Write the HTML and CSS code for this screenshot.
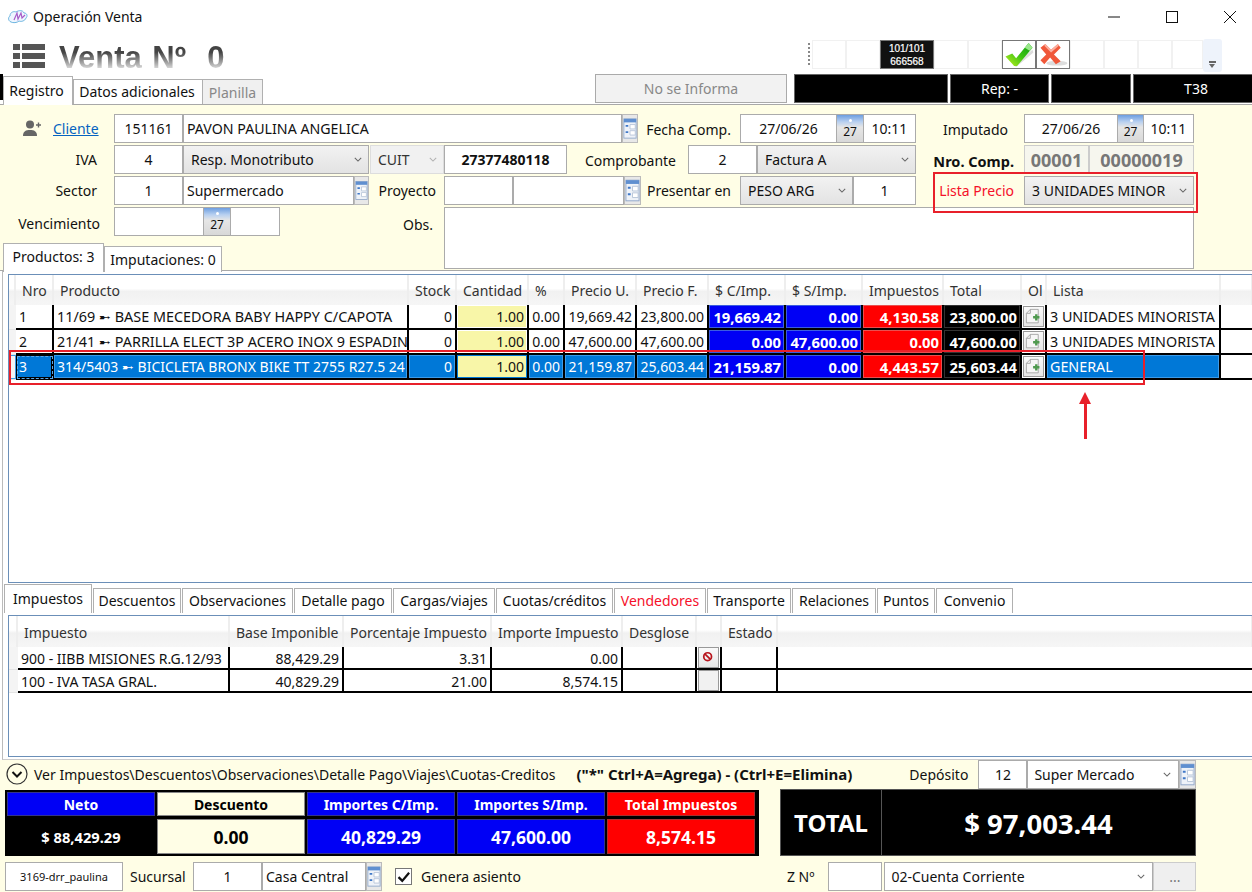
FILE: index.html
```html
<!DOCTYPE html>
<html lang="es">
<head>
  <meta charset="UTF-8">
  <title>Operación Venta</title>
  <link rel="stylesheet" href="styles.css">
</head>
<body>
  <svg class="sprite" aria-hidden="true">
    <symbol id="chev" viewBox="0 0 10 6"><path d="M1 1l4 4 4-4" fill="none" stroke="#666" stroke-width="1.3"/></symbol>
    <symbol id="lookup" viewBox="0 0 16 26">
      <rect x="1" y="2" width="14" height="22" fill="#eef2f8" stroke="#8fa6c8"/>
      <rect x="1" y="2" width="14" height="4" fill="#5f8fd0"/>
      <path d="M3 10h3M3 17h3" stroke="#3f78c8" stroke-width="2"/>
      <path d="M8 8.500h6v5h-6zM8 15.500h6v5h-6z" fill="#fff" stroke="#b6c4d8"/>
    </symbol>
    <symbol id="docadd" viewBox="0 0 24 24">
      <path d="M8 3h10v17H3V8z" fill="#f6f6f6" stroke="#999"/>
      <path d="M8 3v5H3" fill="none" stroke="#999"/>
      <path d="M15.500 9v8M11.500 13h8" stroke="#4f9a4f" stroke-width="3"/>
    </symbol>
  </svg>

  <div class="titlebar">
    <svg class="app-icon" viewBox="0 0 20 14">
      <path d="M3 12C0 11 0 7 2 6 2 2 6 1 8 2c3-2 7-2 8 1 3 0 4 3 2 5-1 3-5 4-7 3-2 2-6 2-8 1z" fill="#eef6ff" stroke="#6fb6e0"/>
      <path d="M6 10l3-7 1 6 3-6 1 5 3-3" fill="none" stroke="#a85cc8" stroke-width="1.200"/>
    </svg>
    <span class="title-text">Operación Venta</span>
    <div class="win-controls">
      <svg class="win-btn" viewBox="0 0 12 12"><path d="M0 6h12" stroke="#111"/></svg>
      <svg class="win-btn" viewBox="0 0 12 12"><rect x=".5" y=".5" width="11" height="11" fill="none" stroke="#111"/></svg>
      <svg class="win-btn" viewBox="0 0 12 12"><path d="M0 0l12 12M12 0L0 12" stroke="#111"/></svg>
    </div>
  </div>

  <div class="header">
    <svg class="menu-icon" viewBox="0 0 32 24">
      <path d="M0 0h7v6H0zM9 0h23v6H9zM0 9h7v6H0zM9 9h23v6H9zM0 18h7v6H0zM9 18h23v6H9z" fill="#555"/>
    </svg>
    <div class="doc-title">Venta Nº&nbsp; 0</div>
    <div class="toolbar">
      <div class="grip"></div>
      <div class="tb-cell"></div>
      <div class="tb-cell"></div>
      <div class="tb-counter">101/101<br>666568</div>
      <div class="tb-cell"></div>
      <div class="tb-cell"></div>
      <div class="tb-btn">
        <svg viewBox="0 0 32 28" width="32" height="27">
          <defs>
            <linearGradient id="okfill" x1="0" y1="1" x2="1" y2="0">
              <stop offset="0" stop-color="#c4f020"/>
              <stop offset="0.5" stop-color="#3cc412"/>
              <stop offset="1" stop-color="#0a9a14"/>
            </linearGradient>
          </defs>
          <path d="M10 25l20-16 1 3-18 15z" fill="#ddd"/>
          <path d="M2 16l7-3 4 5L26 2l4 5-16 19h-3z" fill="url(#okfill)"/>
          <path d="M22 7l4-5 4 5-3 3z" fill="#9be88c"/>
        </svg>
      </div>
      <div class="tb-btn">
        <svg viewBox="0 0 32 28" width="32" height="27">
          <ellipse cx="20" cy="23" rx="11" ry="2.500" fill="#ddd"/>
          <path d="M3 7l5-4 6 6 7-6 3 4-7 7 7 7-5 3-6-7-6 7-4-4 6-6z" fill="#f0583a"/>
          <path d="M8 3l6 6 7-6 1 2-8 7-7-7z" fill="#fbb0a0"/>
        </svg>
      </div>
      <div class="tb-cell"></div>
      <div class="tb-cell"></div>
      <div class="tb-cell"></div>
      <div class="tb-cell tb-last"></div>
      <div class="tb-more"><span class="tb-more-bar"></span><span class="tb-more-arrow"></span></div>
    </div>
  </div>

  <div class="tabrow">
    <div class="edge-mark"></div>
    <div class="tab tab-active tab-registro">Registro</div>
    <div class="tab tab-datos">Datos adicionales</div>
    <div class="tab tab-off">Planilla</div>
    <div class="informa">No se Informa</div>
    <div class="status w154"></div>
    <div class="status w99">Rep: -</div>
    <div class="status w80"></div>
    <div class="status w126">T38</div>
  </div>

  <div class="form">
    <div class="row">
      <div class="client-label">
        <svg class="person-icon" viewBox="0 0 18 17">
          <circle cx="7" cy="4.500" r="4" fill="#666"/>
          <path d="M0 16c0-5 3-6 7-6s7 1 7 6z" fill="#666"/>
          <path d="M13 5h5M15.500 2.500v5" stroke="#666" stroke-width="1.400"/>
        </svg>
        <a class="client-link">Cliente</a>
      </div>
      <div class="fld center w69">151161</div>
      <div class="fld fld-name w439">PAVON PAULINA ANGELICA</div>
      <svg class="lookup w16"><use href="#lookup"/></svg>
      <div class="lbl lbl-low w102 pr9">Fecha Comp.</div>
      <div class="fld center w97">27/06/26</div>
      <div class="cal w26"><span class="cal-dot"></span>27</div>
      <div class="fld center w53">10:11</div>
      <div class="lbl lbl-low w108 pr16">Imputado</div>
      <div class="fld center w94">27/06/26</div>
      <div class="cal w25"><span class="cal-dot"></span>27</div>
      <div class="fld center w51">10:11</div>
    </div>

    <div class="row">
      <div class="lbl w114 pr17">IVA</div>
      <div class="fld center w69">4</div>
      <div class="fld sel w186">Resp. Monotributo<svg class="chev"><use href="#chev"/></svg></div>
      <div class="fld sel sel-off w74">CUIT<svg class="chev chev-off"><use href="#chev"/></svg></div>
      <div class="fld center w123 strong">27377480118</div>
      <div class="lbl lbl-low w121 pr12">Comprobante</div>
      <div class="fld center w69">2</div>
      <div class="fld sel w159">Factura A<svg class="chev"><use href="#chev"/></svg></div>
      <div class="lbl lbl-low lbl-nro w108 pr10">Nro. Comp.</div>
      <div class="fld fld-off center w65">00001</div>
      <div class="fld fld-off center w105">00000019</div>
    </div>

    <div class="row">
      <div class="lbl w114 pr17">Sector</div>
      <div class="fld center w69">1</div>
      <div class="fld w171">Supermercado</div>
      <svg class="lookup w15"><use href="#lookup"/></svg>
      <div class="lbl w75 pr8">Proyecto</div>
      <div class="fld w69"></div>
      <div class="fld w111"></div>
      <svg class="lookup w17"><use href="#lookup"/></svg>
      <div class="lbl w99 pr9">Presentar en</div>
      <div class="fld sel w113">PESO ARG<svg class="chev"><use href="#chev"/></svg></div>
      <div class="fld center w63">1</div>
      <div class="lbl w108 pr10 red">Lista Precio</div>
      <div class="fld sel w170">3 UNIDADES MINOR<svg class="chev"><use href="#chev"/></svg></div>
    </div>

    <div class="row-last">
      <div class="form-left">
        <div class="row row-venc">
          <div class="lbl lbl-venc w114 pr14">Vencimiento</div>
          <div class="fld w90"></div>
          <div class="cal w26"><span class="cal-dot"></span>27</div>
          <div class="fld w50"></div>
          <div class="obs-label">Obs.</div>
        </div>
        <div class="subtabs">
          <div class="tab tab-active tab-prod">Productos: 3</div>
          <div class="tab tab-imput">Imputaciones: 0</div>
        </div>
      </div>
      <div class="fld obs"></div>
    </div>
  </div>

  <div class="grid-wrap">
    <div class="grid-box prod-box">
      <table class="grid prod-grid">
        <colgroup>
          <col class="c7"><col class="c38"><col class="c355"><col class="c48"><col class="c72"><col class="c36"><col class="c72"><col class="c72">
          <col class="c77"><col class="c77"><col class="c81"><col class="c78"><col class="c25"><col class="c174"><col>
        </colgroup>
        <thead>
          <tr>
            <th></th><th>Nro</th><th>Producto</th><th>Stock</th><th>Cantidad</th><th>%</th><th>Precio U.</th><th>Precio F.</th>
            <th>$ C/Imp.</th><th>$ S/Imp.</th><th>Impuestos</th><th>Total</th><th>Ol</th><th>Lista</th><th></th>
          </tr>
        </thead>
        <tbody>
          <tr>
            <td class="rowhead"></td><td>1</td><td class="prod-name">11/69 ➸ BASE MECEDORA BABY HAPPY C/CAPOTA</td>
            <td class="num">0</td><td class="num qty">1.00</td><td class="num">0.00</td><td class="num">19,669.42</td><td class="num">23,800.00</td>
            <td class="num blue">19,669.42</td><td class="num blue">0.00</td><td class="num redc">4,130.58</td><td class="num blackc">23,800.00</td>
            <td class="doc"><span class="doc-btn"><svg><use href="#docadd"/></svg></span></td><td class="lista">3 UNIDADES MINORISTA</td><td class="end"></td>
          </tr>
          <tr>
            <td class="rowhead"></td><td>2</td><td class="prod-name">21/41 ➸ PARRILLA ELECT 3P ACERO INOX 9 ESPADIN</td>
            <td class="num">0</td><td class="num qty">1.00</td><td class="num">0.00</td><td class="num">47,600.00</td><td class="num">47,600.00</td>
            <td class="num blue">0.00</td><td class="num blue">47,600.00</td><td class="num redc">0.00</td><td class="num blackc">47,600.00</td>
            <td class="doc"><span class="doc-btn"><svg><use href="#docadd"/></svg></span></td><td class="lista">3 UNIDADES MINORISTA</td><td class="end"></td>
          </tr>
          <tr class="selected">
            <td class="rowhead"></td><td class="focus">3</td><td class="prod-name">314/5403 ➸ BICICLETA BRONX BIKE TT 2755 R27.5 24</td>
            <td class="num">0</td><td class="num qty">1.00</td><td class="num">0.00</td><td class="num">21,159.87</td><td class="num">25,603.44</td>
            <td class="num blue">21,159.87</td><td class="num blue">0.00</td><td class="num redc">4,443.57</td><td class="num blackc">25,603.44</td>
            <td class="doc"><span class="doc-btn"><svg><use href="#docadd"/></svg></span></td><td class="lista">GENERAL</td><td class="end"></td>
          </tr>
        </tbody>
      </table>
    </div>

    <div class="lower-tabs">
      <div class="tab tab-active lt-imp">Impuestos</div>
      <div class="tab lt-desc">Descuentos</div>
      <div class="tab lt-obs">Observaciones</div>
      <div class="tab lt-det">Detalle pago</div>
      <div class="tab lt-car">Cargas/viajes</div>
      <div class="tab lt-cuo">Cuotas/créditos</div>
      <div class="tab lt-ven red">Vendedores</div>
      <div class="tab lt-tra">Transporte</div>
      <div class="tab lt-rel">Relaciones</div>
      <div class="tab lt-pun">Puntos</div>
      <div class="tab lt-con">Convenio</div>
    </div>

    <div class="grid-box tax-box">
      <table class="grid tax-grid">
        <colgroup>
          <col class="c9"><col class="c212"><col class="c114"><col class="c148"><col class="c131"><col class="c74"><col class="c25"><col class="c56"><col>
        </colgroup>
        <thead>
          <tr>
            <th></th><th>Impuesto</th><th>Base Imponible</th><th>Porcentaje Impuesto</th><th>Importe Impuesto</th><th>Desglose</th><th></th><th>Estado</th><th></th>
          </tr>
        </thead>
        <tbody>
          <tr>
            <td class="rowhead"></td><td>900 - IIBB MISIONES R.G.12/93</td><td class="num">88,429.29</td><td class="num">3.31</td><td class="num">0.00</td><td></td>
            <td class="doc"><span class="doc-btn">
              <svg viewBox="0 0 22 22"><circle cx="10" cy="10" r="4.500" fill="none" stroke="#b8141c" stroke-width="2"/><path d="M7 7l6 6" stroke="#b8141c" stroke-width="2"/></svg>
            </span></td><td></td><td class="end"></td>
          </tr>
          <tr>
            <td class="rowhead"></td><td>100 - IVA TASA GRAL.</td><td class="num">40,829.29</td><td class="num">21.00</td><td class="num">8,574.15</td><td></td>
            <td class="doc"><span class="doc-btn doc-empty"></span></td><td></td><td class="end"></td>
          </tr>
        </tbody>
      </table>
    </div>
  </div>

  <div class="bottom">
    <div class="info-row">
      <svg class="expand" viewBox="0 0 22 22">
        <circle cx="11" cy="11" r="10" fill="none" stroke="#333" stroke-width="1.200"/>
        <path d="M6.500 9l4.500 4.500L15.500 9" fill="none" stroke="#111" stroke-width="2"/>
      </svg>
      <span class="info-text">Ver Impuestos\Descuentos\Observaciones\Detalle Pago\Viajes\Cuotas-Creditos</span>
      <span class="info-keys">("*" Ctrl+A=Agrega) - (Ctrl+E=Elimina)</span>
      <span class="deposit-label">Depósito</span>
      <div class="fld center w49">12</div>
      <div class="fld sel-plain w152">Super Mercado<svg class="chev"><use href="#chev"/></svg></div>
      <svg class="lookup w17"><use href="#lookup"/></svg>
    </div>

    <div class="totals-row">
      <div class="totals">
        <div class="t-head t-blue">Neto</div>
        <div class="t-head t-cream">Descuento</div>
        <div class="t-head t-blue">Importes C/Imp.</div>
        <div class="t-head t-blue">Importes S/Imp.</div>
        <div class="t-head t-red">Total Impuestos</div>
        <div class="t-val t-black">$ 88,429.29</div>
        <div class="t-val t-cream t-big">0.00</div>
        <div class="t-val t-blue t-big">40,829.29</div>
        <div class="t-val t-blue t-big">47,600.00</div>
        <div class="t-val t-red t-big">8,574.15</div>
      </div>
      <div class="grand">
        <div class="grand-label">TOTAL</div>
        <div class="grand-value">$ 97,003.44</div>
      </div>
    </div>

    <div class="footer-row">
      <div class="fld center user-box">3169-drr_paulina</div>
      <span class="foot-label">Sucursal</span>
      <div class="fld center w69">1</div>
      <div class="fld w104">Casa Central</div>
      <svg class="lookup w16"><use href="#lookup"/></svg>
      <span class="check">
        <svg viewBox="0 0 12 12"><path d="M2 6.500l3 3L10.500 3" fill="none" stroke="#111" stroke-width="1.800"/></svg>
      </span>
      <span class="check-label">Genera asiento</span>
      <span class="zn-label">Z Nº</span>
      <div class="fld w54"></div>
      <div class="fld sel-plain cuenta">02-Cuenta Corriente<svg class="chev"><use href="#chev"/></svg></div>
      <div class="dots">...</div>
    </div>
  </div>

  <!-- annotations drawn on top of the screenshot -->
  <div class="mark mark-lista"></div>
  <div class="mark mark-row"></div>
  <div class="arrow-shaft"></div>
  <div class="arrow-head"></div>
</body>
</html>
```

FILE: styles.css
```css
* {
  margin: 0;
  padding: 0;
  box-sizing: border-box;
}

html, body {
  width: 1252px;
  height: 892px;
  overflow: hidden;
}

body {
  position: relative;
  background: #fff;
  color: #111;
  font-family: "Noto Sans", "Open Sans", sans-serif;
  font-size: 14px;
}

.sprite {
  display: block;
  width: 0;
  height: 0;
}

/* title bar */
.titlebar {
  display: flex;
  align-items: center;
  height: 33px;
  padding-left: 8px;
}

.app-icon {
  width: 20px;
  height: 14px;
}

.title-text {
  margin-left: 5px;
}

.win-controls {
  display: flex;
  gap: 46px;
  margin-left: auto;
  margin-right: 16px;
}

.win-btn {
  width: 12px;
  height: 12px;
}

/* header */
.header {
  display: flex;
  height: 41px;
  padding-left: 13px;
}

.menu-icon {
  width: 32px;
  height: 24px;
  margin-top: 11px;
}

.doc-title {
  margin-left: 14px;
  margin-top: 7px;
  height: 35px;
  font-family: "Liberation Sans", sans-serif;
  font-size: 31px;
  line-height: 35px;
  word-spacing: 2px;
  font-weight: bold;
  background: linear-gradient(#444 35%, #f4f4f4 90%);
  -webkit-background-clip: text;
  background-clip: text;
  -webkit-text-fill-color: transparent;
  white-space: nowrap;
}

.toolbar {
  position: absolute;
  left: 808px;
  top: 39px;
  display: flex;
}

.grip {
  width: 4px;
  height: 23px;
  margin-top: 4px;
  background: repeating-linear-gradient(#888 0 2px, transparent 2px 4px);
  background-size: 2px 100%;
  background-repeat: no-repeat;
}

.tb-cell {
  width: 34px;
  height: 29px;
  margin-top: 1px;
  border: 1px solid #f1f1f1;
}

.tb-last {
  width: 31px;
}

.tb-counter {
  width: 54px;
  height: 29px;
  margin-top: 1px;
  background: #111;
  border: 1px solid #777;
  color: #fff;
  font-family: "Liberation Sans", sans-serif;
  font-size: 10px;
  -webkit-text-stroke: 0.2px #fff;
  line-height: 13px;
  padding-top: 1px;
  text-align: center;
}

.tb-btn {
  width: 34px;
  height: 29px;
  margin-top: 1px;
  border: 1px solid #777;
  background: #fff;
  overflow: hidden;
}

.tb-more {
  position: relative;
  width: 19px;
  height: 33px;
  background: #eef3fb;
  border-radius: 3px;
}

.tb-more-bar {
  position: absolute;
  left: 6px;
  top: 22px;
  width: 7px;
  height: 2px;
  background: #666;
}

.tb-more-arrow {
  position: absolute;
  left: 6px;
  top: 25px;
  border-left: 3.500px solid transparent;
  border-right: 3.500px solid transparent;
  border-top: 4px solid #666;
}

/* top tabs */
.tabrow {
  display: flex;
  height: 31px;
  border-bottom: 1px solid #a8a8a8;
}

.edge-mark {
  flex: none;
  width: 3px;
  height: 26px;
  background: #000;
}

.tab {
  display: flex;
  flex: none;
  align-items: center;
  justify-content: center;
  background: #fff;
  border: 1px solid #b0b0b0;
  border-bottom: none;
  white-space: nowrap;
}

.tab-active {
  margin-bottom: -1px;
  padding-bottom: 4px;
}

.tab-registro {
  width: 70px;
  margin-top: 2px;
  padding-right: 3px;
  padding-bottom: 2px;
}

.tab-datos {
  width: 130px;
  margin-top: 5px;
  padding-right: 2px;
  padding-bottom: 1px;
}

.tab-off {
  width: 60px;
  margin-top: 5px;
  background: #f0f0f0;
  color: #888;
  border-left: none;
}

.informa {
  display: flex;
  flex: none;
  align-items: center;
  justify-content: center;
  width: 192px;
  height: 29px;
  margin-left: 332px;
  margin-right: 7px;
  background: #f2f2f2;
  border: 1px solid #aaa;
  color: #888;
}

.status {
  display: flex;
  flex: none;
  align-items: center;
  justify-content: center;
  height: 29px;
  margin-right: 2px;
  background: #000;
  border: 1px solid #666;
  color: #fff;
}

/* form */
.form {
  height: 166px;
  padding-top: 9px;
  background: #fffee6;
  border-bottom: 1px solid #a8a8a8;
}

.row {
  display: flex;
  height: 29px;
  margin-bottom: 2px;
}

.row-last {
  display: flex;
  height: 63px;
}

.form-left {
  width: 444px;
}

.row-venc {
  margin-bottom: 6px;
}

.lbl {
  display: flex;
  flex: none;
  align-items: center;
  justify-content: flex-end;
  white-space: nowrap;
}

.lbl-low {
  padding-top: 2px;
}

.lbl-venc {
  padding-top: 4px;
}

.lbl-nro {
  font-size: 14.500px;
  font-weight: bold;
}

.client-label {
  display: flex;
  flex: none;
  align-items: center;
  width: 114px;
  padding-left: 23px;
}

.person-icon {
  width: 18px;
  height: 17px;
}

.client-link {
  margin-left: 12px;
  color: #0563c1;
  text-decoration: underline;
}

.obs-label {
  margin-left: auto;
  margin-right: 11px;
  padding-top: 8px;
}

.fld {
  display: flex;
  flex: none;
  align-items: center;
  height: 29px;
  padding: 0 3px;
  background: #fff;
  border: 1px solid #ababab;
  white-space: nowrap;
  overflow: hidden;
}

.fld-name {
  font-size: 14.200px;
}

.center {
  justify-content: center;
}

.strong {
  font-weight: bold;
}

.red {
  color: #f5102a;
}

.sel {
  justify-content: space-between;
  padding: 0 6px 0 7px;
  background: linear-gradient(#f2f2f2, #e3e3e3);
}

.sel-plain {
  justify-content: space-between;
  padding: 0 7px 0 6px;
}

.sel-off {
  margin-left: 1px;
  background: #f1f1f1;
  border-color: #ddd;
  color: #333;
}

.fld-off {
  background: #f6f6ee;
  border-color: #ccc;
  color: #777;
  font-weight: bold;
  font-size: 18px;
}

.chev {
  flex: none;
  width: 8px;
  height: 5px;
}

.chev-off {
  opacity: 0.45;
}

.lookup {
  flex: none;
  height: 29px;
  background: #e8e8e8;
  border: 1px solid #bbb;
}

.cal {
  position: relative;
  display: flex;
  flex: none;
  align-items: flex-end;
  justify-content: center;
  height: 29px;
  padding-bottom: 2px;
  background: linear-gradient(#6d9ee0 0, #b8d0f0 25%, #e6e6e6 45%, #d8d8d8 100%);
  border-top: 1px solid #ababab;
  border-bottom: 1px solid #ababab;
  font-size: 12px;
}

.cal-dot {
  position: absolute;
  left: 50%;
  top: 4px;
  width: 3px;
  height: 3px;
  margin-left: -1px;
  background: #fff;
  border-radius: 50%;
}

.obs {
  width: 750px;
  height: 62px;
}

.subtabs {
  display: flex;
  align-items: flex-end;
  height: 29px;
  padding-left: 3px;
}

.tab-prod {
  width: 101px;
  height: 29px;
}

.tab-imput {
  width: 118px;
  height: 26px;
  margin-bottom: -1px;
}

.pr8 { padding-right: 8px; }
.pr9 { padding-right: 9px; }
.pr10 { padding-right: 10px; }
.pr12 { padding-right: 12px; }
.pr14 { padding-right: 14px; }
.pr16 { padding-right: 16px; }
.pr17 { padding-right: 17px; }

.w15 { width: 15px; }
.w16 { width: 16px; }
.w17 { width: 17px; }
.w25 { width: 25px; }
.w26 { width: 26px; }
.w49 { width: 49px; }
.w50 { width: 50px; }
.w51 { width: 51px; }
.w53 { width: 53px; }
.w54 { width: 54px; }
.w63 { width: 63px; }
.w65 { width: 65px; }
.w69 { width: 69px; }
.w74 { width: 74px; }
.w75 { width: 75px; }
.w80 { width: 80px; }
.w90 { width: 90px; }
.w94 { width: 94px; }
.w97 { width: 97px; }
.w99 { width: 99px; }
.w102 { width: 102px; }
.w104 { width: 104px; }
.w105 { width: 105px; }
.w108 { width: 108px; }
.w111 { width: 111px; }
.w113 { width: 113px; }
.w114 { width: 114px; }
.w121 { width: 121px; }
.w123 { width: 123px; }
.w126 { width: 126px; }
.w152 { width: 152px; }
.w154 { width: 154px; }
.w159 { width: 159px; }
.w170 { width: 170px; }
.w171 { width: 171px; }
.w186 { width: 186px; }
.w439 { width: 439px; }

/* grids */
.grid-wrap {
  height: 489px;
  margin-left: 2px;
  padding-top: 3px;
  padding-left: 5px;
  border-left: 1px solid #bbb;
  border-bottom: 1px solid #ccc;
}

.grid-box {
  border: 1px solid #6b8fb8;
  border-right: none;
  background: #fff;
}

.prod-box {
  height: 309px;
}

.tax-box {
  height: 142px;
}

.grid {
  width: 1244px;
  table-layout: fixed;
  border-collapse: separate;
  border-spacing: 0;
}

.grid th {
  height: 30px;
  padding-left: 6px;
  background: linear-gradient(#fff 45%, #f1f1f1 55%, #f6f6f6);
  border-right: 2px solid #eee;
  color: #333;
  font-weight: normal;
  text-align: left;
  white-space: nowrap;
  overflow: hidden;
}

.tax-grid th {
  height: 31px;
  padding-top: 2px;
}

.grid td {
  height: 25px;
  padding: 0 3px;
  background: #fff;
  border-right: 2px solid #000;
  border-bottom: 2px solid #000;
  white-space: nowrap;
  overflow: hidden;
}

.tax-grid td {
  height: 23px;
  padding-top: 2px;
}

.grid .prod-name {
  font-size: 14.400px;
}

.grid .selected .prod-name {
  font-size: 14px;
}

.grid .lista {
  font-size: 14.300px;
}

.grid .rowhead {
  background: #f4f4f4;
  border-right: none;
  border-bottom: 1px solid #e4e4e4;
}

.grid .end {
  border-right: none;
}

.num {
  text-align: right;
}

.grid .qty {
  background: #f8f6a8;
  box-shadow: inset 0 0 0 1px #fff;
}

.grid .blue, .grid .redc, .grid .blackc {
  color: #fff;
  font-size: 14.800px;
  font-weight: bold;
}

.grid .blue {
  background: #0000f5;
  box-shadow: inset 0 0 0 1px #3a5ce0;
}

.grid .redc {
  background: #ff0000;
  box-shadow: inset 0 0 0 1px #e85050;
}

.grid .blackc {
  background: #000;
  box-shadow: inset 0 0 0 1px #333;
}

.grid .doc {
  padding: 0 1px;
}

.doc-btn {
  display: block;
  width: 21px;
  height: 21px;
  background: linear-gradient(#fafafa, #e6e6e6);
  border: 1px solid #999;
}

.doc-btn svg {
  display: block;
  width: 19px;
  height: 19px;
}

.doc-empty {
  background: #f1f1f1;
}

.selected td {
  background: #0078d7;
  box-shadow: inset 0 0 0 1px #3d9be8;
  color: #fff;
}

.selected .end {
  background: #fff;
  box-shadow: none;
}

.selected .qty {
  box-shadow: inset 0 0 0 1px #0078d7;
  color: #111;
}

.grid .focus {
  outline: 1px dashed #5aa8e8;
  outline-offset: -2px;
  box-shadow: inset 0 0 0 1px #000;
}

.selected .doc {
  background: #fff;
  box-shadow: none;
}

.lower-tabs {
  display: flex;
  align-items: flex-end;
  height: 32px;
  padding-bottom: 2px;
  margin-left: -4px;
}

.lower-tabs .tab {
  height: 25px;
  margin-right: 1px;
  padding-bottom: 2px;
}

.lower-tabs .tab-active {
  height: 29px;
  margin-bottom: 0;
  padding-bottom: 1px;
}

.lt-imp { width: 88px; }
.lt-desc { width: 88px; }
.lt-obs { width: 111px; }
.lt-det { width: 98px; }
.lt-car { width: 102px; }
.lt-cuo { width: 117px; }
.lt-ven { width: 92px; }
.lt-tra { width: 84px; }
.lt-rel { width: 84px; }
.lt-pun { width: 58px; }
.lt-con { width: 77px; }

.c7 { width: 7px; }
.c9 { width: 9px; }
.c25 { width: 25px; }
.c36 { width: 36px; }
.c38 { width: 38px; }
.c48 { width: 48px; }
.c56 { width: 56px; }
.c72 { width: 72px; }
.c74 { width: 74px; }
.c77 { width: 77px; }
.c78 { width: 78px; }
.c81 { width: 81px; }
.c114 { width: 114px; }
.c131 { width: 131px; }
.c148 { width: 148px; }
.c174 { width: 174px; }
.c212 { width: 212px; }
.c355 { width: 355px; }

/* bottom area */
.bottom {
  height: 132px;
  background: #fffee6;
}

.info-row {
  display: flex;
  align-items: center;
  height: 28px;
  padding-left: 6px;
}

.expand {
  flex: none;
  width: 22px;
  height: 22px;
}

.info-text {
  margin-left: 6px;
  white-space: nowrap;
}

.info-keys {
  margin-left: 21px;
  font-size: 15px;
  font-weight: bold;
  white-space: nowrap;
}

.deposit-label {
  margin-left: 57px;
  margin-right: 10px;
}

.totals-row {
  display: flex;
  margin-top: 2px;
  padding-left: 5px;
}

.totals {
  display: grid;
  grid-template-columns: repeat(5, 148px);
  grid-template-rows: 24px 35px;
  gap: 3px 2px;
  width: 754px;
  height: 66px;
  padding: 2px;
  background: #000;
}

.t-head, .t-val {
  display: flex;
  align-items: center;
  justify-content: center;
  font-weight: bold;
}

.t-val {
  padding-top: 1px;
  font-size: 14.700px;
}

.t-blue {
  background: #0000f5;
  border: 1px solid #33338c;
  color: #fff;
}

.t-red {
  background: #ff0000;
  border: 1px solid #a83030;
  color: #fff;
}

.t-cream {
  background: #fffee6;
  border: 1px solid #888;
  color: #000;
}

.t-black {
  background: #000;
  color: #fff;
}

.t-val.t-big {
  font-size: 17.500px;
}

.grand {
  display: flex;
  width: 416px;
  height: 67px;
  margin-left: 21px;
  margin-top: -1px;
  background: #000;
  border: 1px solid #555;
  color: #fff;
  font-weight: bold;
}

.grand-label {
  display: flex;
  align-items: center;
  justify-content: center;
  width: 100px;
  font-size: 24px;
}

.grand-value {
  display: flex;
  align-items: center;
  justify-content: center;
  flex: 1;
  padding-top: 2px;
  border-left: 1px solid #555;
  font-size: 27.500px;
}

.footer-row {
  display: flex;
  align-items: center;
  margin-top: 6px;
  padding-left: 5px;
}

.user-box {
  width: 118px;
  font-size: 11px;
}

.foot-label {
  width: 70px;
  padding-left: 7px;
}

.check {
  width: 17px;
  height: 17px;
  margin-left: 13px;
  background: #fff;
  border: 1px solid #777;
}

.check svg {
  display: block;
  width: 15px;
  height: 15px;
}

.check-label {
  margin-left: 9px;
}

.zn-label {
  margin-left: 266px;
  margin-right: 14px;
}

.cuenta {
  width: 269px;
  margin-left: 2px;
}

.dots {
  display: flex;
  align-items: center;
  justify-content: center;
  width: 43px;
  height: 29px;
  background: #efefef;
  border: 1px solid #ccc;
  color: #777;
}

/* red annotations */
.mark {
  position: absolute;
  border: 2px solid #e8202a;
}

.mark-lista {
  left: 933px;
  top: 172px;
  width: 265px;
  height: 41px;
}

.mark-row {
  left: 9px;
  top: 350px;
  width: 1136px;
  height: 35px;
}

.arrow-shaft {
  position: absolute;
  left: 1084px;
  top: 400px;
  width: 3px;
  height: 39px;
  background: #e8202a;
}

.arrow-head {
  position: absolute;
  left: 1079px;
  top: 392px;
  border-left: 6.500px solid transparent;
  border-right: 6.500px solid transparent;
  border-bottom: 12px solid #e8202a;
}
```
